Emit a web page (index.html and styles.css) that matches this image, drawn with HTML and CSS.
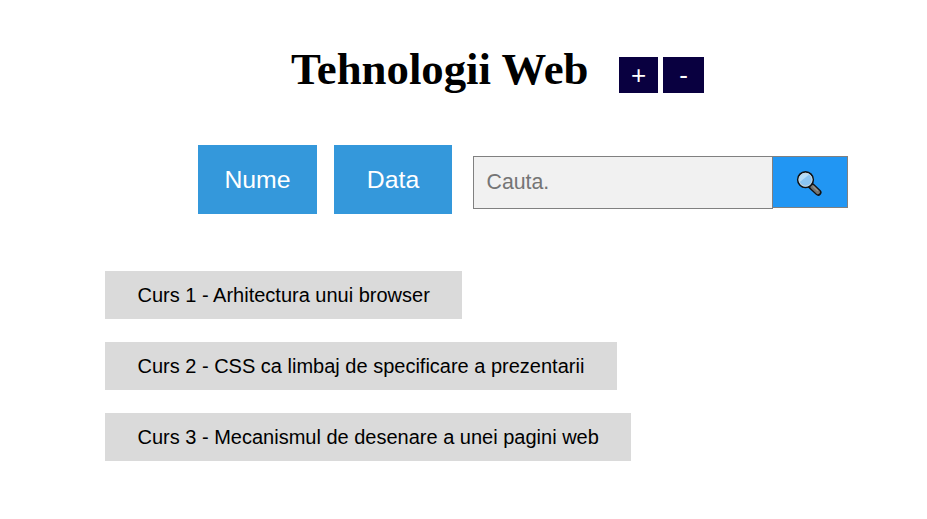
FILE: index.html
```html
<!DOCTYPE html>
<html lang="ro">
<head>
<meta charset="utf-8">
<title>Tehnologii Web</title>
<link rel="stylesheet" href="styles.css">
</head>
<body>
<header class="header">
  <h1 class="title">Tehnologii Web</h1>
  <div class="zoom-buttons">
    <button class="zoom plus">+</button>
    <button class="zoom minus">-</button>
  </div>
</header>
<div class="toolbar">
  <button class="sort by-name">Nume</button>
  <button class="sort by-date">Data</button>
  <form class="search">
    <input class="search-input" type="text" placeholder="Cauta.">
    <button class="search-button" type="button" aria-label="Cauta">
      <svg class="search-icon" width="26" height="26" viewBox="0 0 26 26">
        <path d="M15.3 15L22.2 21.4" stroke="#111" stroke-width="6.6" stroke-linecap="round"/>
        <path d="M16.3 15.8L22 21.2" stroke="#737370" stroke-width="4" stroke-linecap="round"/>
        <path d="M17 15.4L21.8 19.9" stroke="#999990" stroke-width="1.2"/>
        <circle cx="9.5" cy="8.7" r="7.8" fill="#8ac4f2" stroke="#111" stroke-width="1.6"/>
        <path d="M3.7 11.1A6.3 6.3 0 0 1 13.2 3.6Z" fill="#b5dcf7"/>
        <circle cx="9.5" cy="8.7" r="6.5" fill="none" stroke="#c8d4dc" stroke-width="1"/>
      </svg>
    </button>
  </form>
</div>
<main class="courses">
  <div class="course">Curs 1 - Arhitectura unui browser</div>
  <div class="course">Curs 2 - CSS ca limbaj de specificare a prezentarii</div>
  <div class="course">Curs 3 - Mecanismul de desenare a unei pagini web</div>
</main>
</body>
</html>
```

FILE: styles.css
```css
* { box-sizing: border-box; }
body {
  margin: 0;
  height: 519px;
  overflow: hidden;
  background: #fff;
  color: #000;
  font-family: "Liberation Sans", Arial, sans-serif;
}
button { font-family: inherit; border: 0; padding: 0; margin: 0; }
.header {
  display: flex;
  height: 145px;
  padding: 42px 0 0 291px;
}
.title {
  margin: 0;
  width: 328px;
  font: bold 44.8px/55px "Liberation Serif", "Times New Roman", serif;
  white-space: nowrap;
}
.zoom-buttons { display: flex; gap: 5px; margin-top: 15px; height: 36px; }
.zoom { background: #090040; color: #fff; font-size: 26px; line-height: 36px; }
.plus { width: 39px; }
.minus { width: 41px; }
.toolbar {
  display: flex;
  height: 126px;
  padding-left: 198px;
  align-items: flex-start;
}
.sort { height: 69px; background: #3498db; color: #fff; font-size: 24.8px; }
.by-name { width: 119px; margin-right: 17px; }
.by-date { width: 118px; margin-right: 21px; }
.search { display: flex; align-items: flex-start; margin-top: 11px; }
.search-input {
  width: 300px;
  height: 53px;
  margin: 0;
  padding: 0 12.5px;
  border: 1px solid #808080;
  border-radius: 0;
  background: #f1f1f1;
  font: 21.3px "Liberation Sans", Arial, sans-serif;
}
.search-input::placeholder { color: #757575; }
.search-button {
  display: flex;
  width: 75px;
  height: 52px;
  padding: 14px 0 0 23px;
  border: 1px solid #808080;
  border-left: 0;
  background: #2196f3;
}
.courses {
  display: flex;
  flex-direction: column;
  align-items: flex-start;
  gap: 23px;
  padding-left: 105px;
}
.course {
  height: 48px;
  padding: 0 32.5px;
  background: #dadada;
  font-size: 20px;
  line-height: 48px;
  white-space: nowrap;
}
```
